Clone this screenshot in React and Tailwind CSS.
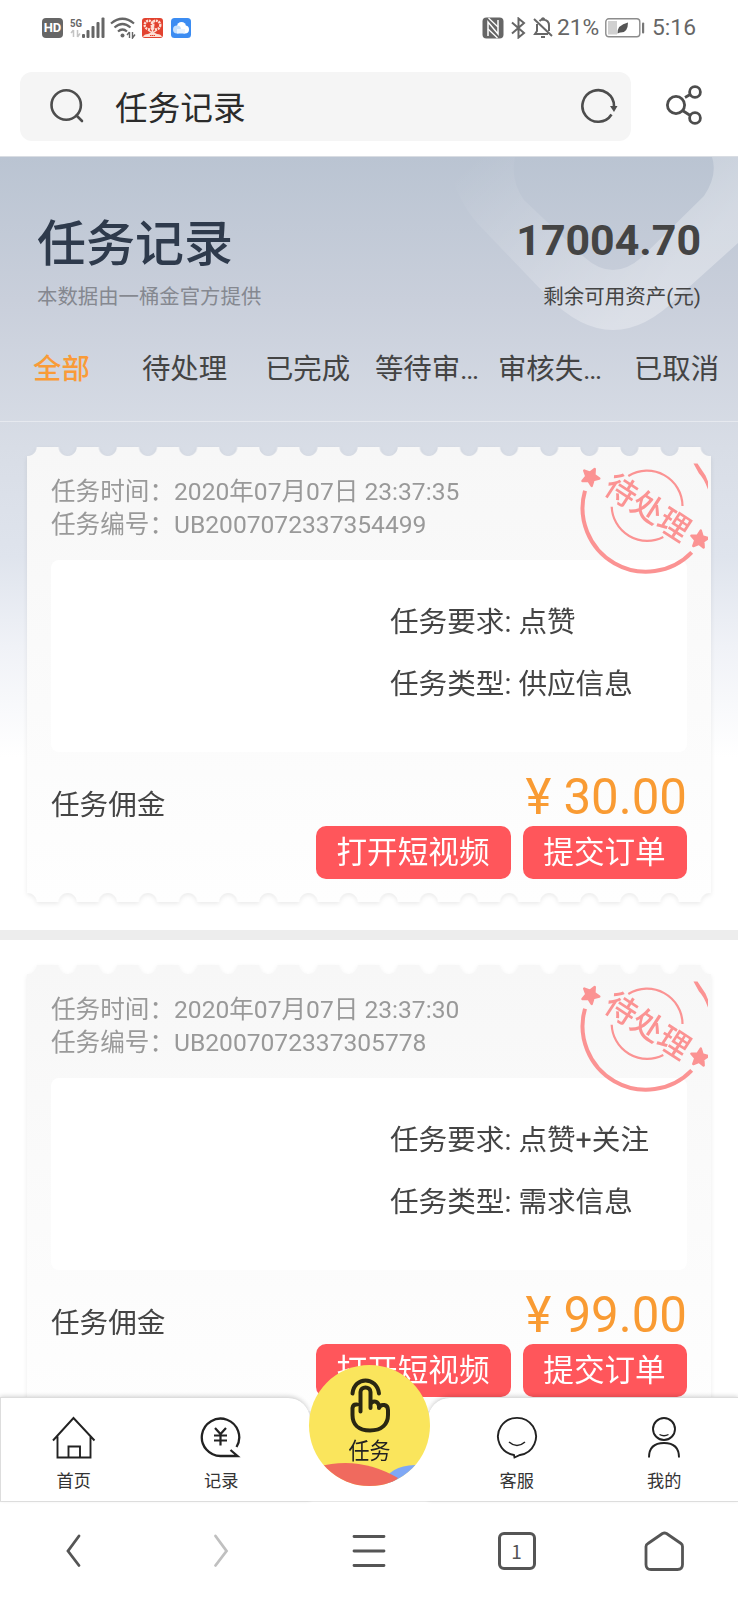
const tabs = ['全部', '待处理', '已完成', '等待审…', '审核失…', '已取消'];

const tasks = [
  { time: '2020年07月07日 23:37:35', no: 'UB2007072337354499', need: '点赞', type: '供应信息', price: '30.00' },
  { time: '2020年07月07日 23:37:30', no: 'UB2007072337305778', need: '点赞+关注', type: '需求信息', price: '99.00' },
];

const App = () => {
  return (
    <div className="relative w-[738px] h-[1600px] overflow-hidden bg-white text-[#444] font-['Roboto','Noto_Sans_CJK_SC',sans-serif]">
      <StatusBar />
      <SearchBar />

      <main className="bg-[linear-gradient(180deg,#bac4d2_0px,#c9cfdb_143px,#d8dde6_290px,#dfe4ed_400px,#f0f2f7_490px,#ffffff_600px)]">
        <Header />
        <div className="mt-[25px]">
          {tasks.map((task, i) => (
            <div key={task.no}>
              {i > 0 && <div className="h-[10px] bg-[#ededed] mt-[28px] mb-[25px]" />}
              <TaskCard {...task} />
            </div>
          ))}
        </div>
      </main>

      <div className="absolute inset-x-0 bottom-0">
        <BottomNav />
        <BrowserBar />
      </div>
    </div>
  );
};

const StatusBar = () => {
  return (
    <div className="flex items-center justify-between h-14 pl-[42px] pr-[43px] text-[#666]">
      <div className="flex items-center">
        <div className="w-[21px] h-5 rounded bg-[#666] text-white text-[13px] leading-5 font-bold text-center">HD</div>
        <svg className="ml-[7px]" width="35" height="22" viewBox="0 0 35 22" fill="#666">
          <text x="0" y="9.5" fontSize="11.5" fontWeight="700" fontFamily="Roboto" textLength="12" lengthAdjust="spacingAndGlyphs">5G</text>
          <path d="M3.5 13v7M3.5 13l-2.5 3M7.5 13v7M7.5 20l2.5-3.5" stroke="#c4c4c4" strokeWidth="1.5" fill="none" />
          <rect x="12" y="17" width="3" height="4" rx="1" />
          <rect x="16.5" y="13" width="3" height="8" rx="1" />
          <rect x="21.5" y="9" width="3" height="12" rx="1" />
          <rect x="26.5" y="5" width="3" height="16" rx="1" />
          <rect x="31.5" y="0.5" width="3" height="20.5" rx="1" />
        </svg>
        <svg className="ml-[5px]" width="26" height="22" viewBox="0 0 26 22" fill="none" stroke="#666" strokeWidth="2.2">
          <path d="M1 6.5Q12.5-3 24 6.5M4.5 10.5Q12.5 3.5 20.5 10.5M8 14.5Q12.5 10.5 17 14.5" />
          <circle cx="12.5" cy="18.5" r="2" fill="#666" stroke="none" />
          <path d="M19.5 15v6M19.5 15l-2.5 3M22.5 15v6l2.5-3.5" strokeWidth="1.4" />
        </svg>
        <svg className="ml-[6px]" width="21" height="20" viewBox="0 0 21 20">
          <rect width="21" height="20" rx="3" fill="#e2422f" />
          <circle cx="7" cy="7" r="4.3" fill="none" stroke="#fde0d5" strokeWidth="2.4" strokeDasharray="2 0.8" />
          <circle cx="14" cy="7" r="4.3" fill="none" stroke="#fde0d5" strokeWidth="2.4" strokeDasharray="2 0.8" />
          <path d="M6 12l4.5 3 4.5-3M10.5 8v6" stroke="#fde0d5" strokeWidth="1.5" fill="none" />
          <path d="M1 19q1-3 5-3l2-1h5l2 1q4 0 5 3z" fill="#fde0d5" />
          <path d="M8 17.5h5" stroke="#e2422f" strokeWidth="1.2" strokeDasharray="1.5 0.5" />
        </svg>
        <svg className="ml-[8px]" width="20" height="20" viewBox="0 0 20 20">
          <rect width="20" height="20" rx="3.5" fill="#3b8cf2" />
          <circle cx="10.5" cy="8.5" r="4.5" fill="#fff" />
          <circle cx="14" cy="11.5" r="4" fill="#fff" />
          <circle cx="6" cy="11.5" r="4" fill="#c5e0fd" />
          <rect x="6" y="11" width="8" height="4.5" fill="#e8f3ff" />
        </svg>
      </div>
      <div className="flex items-center">
        <svg className="-ml-px" width="22" height="22" viewBox="0 0 22 22">
          <rect x="0.5" y="0.5" width="21" height="21" rx="4" fill="#666" />
          <path d="M6 19V5l10 12V3" fill="none" stroke="#fff" strokeWidth="1.5" />
          <path d="M6.5 1l9.5 9M6 12l9.5 9" stroke="#fff" strokeWidth="1.3" />
        </svg>
        <svg className="ml-[7px]" width="15" height="22" viewBox="0 0 15 22" fill="none" stroke="#666" strokeWidth="2">
          <path d="M1 5.5l12 10.5-5.5 4.5V1.5L13 6 1 16.5" />
        </svg>
        <svg className="ml-[7px]" width="21" height="22" viewBox="0 0 21 22" fill="none" stroke="#666" strokeWidth="2">
          <path d="M4 7v7l-2 3h13M6.5 4Q8 2.5 10 2.5 16 3 16 8.5V14M8.5 2.5q1.5-2.5 3 0M1 2l18 17" />
          <path d="M8 20h4" />
        </svg>
        <span className="ml-[3px] pt-px text-[22.8px] w-[47px]">21%</span>
        <svg className="ml-px mr-px" width="40" height="20" viewBox="0 0 40 20">
          <rect x="0.8" y="0.8" width="34" height="18" rx="3" fill="#fff" stroke="#8c8c8c" strokeWidth="1.4" />
          <rect x="3" y="3" width="9" height="13.5" fill="#d0d0d0" />
          <path d="M12.5 15.5Q12 7 23 4.5 23 15 15 14.5z" fill="#555" />
          <rect x="37" y="4.5" width="2.2" height="11" rx="1" fill="#777" />
        </svg>
        <span className="ml-[6px] pt-px text-[22.8px] w-[43px]">5:16</span>
      </div>
    </div>
  );
};

const SearchBar = () => {
  return (
    <div className="flex items-start pt-4 pl-5 h-[101px] border-b border-[#d9dde3]">
      <div className="flex items-center w-[611px] h-[69px] rounded-xl bg-[#f5f5f5] pl-[30px] pr-[13px]">
        <svg className="-mt-0.5" width="34" height="34" viewBox="0 0 34 34" fill="none" stroke="#4d4d4d" strokeWidth="2.6" strokeLinecap="round">
          <circle cx="16.2" cy="16" r="14.7" />
          <path d="M26.5 26.5l5.5 5.5" />
        </svg>
        <div className="ml-[31px] pt-[5px] flex-1 text-[32.7px] leading-[48px] text-[#2b2b2b]">任务记录</div>
        <svg className="-mt-0.5" width="37" height="36" viewBox="0 0 37 36" fill="none" stroke="#4d4d4d" strokeWidth="2.6">
          <path d="M30.5 26.5A15.8 15.8 0 1 1 33 18" />
          <path d="M29 18h7.5L33 24z" fill="#4d4d4d" stroke="none" />
        </svg>
      </div>
      <svg className="ml-[34px] mt-[13px]" width="38" height="40" viewBox="0 0 38 40" fill="none" stroke="#4d4d4d" strokeWidth="2.8">
        <circle cx="11" cy="20" r="8.6" />
        <circle cx="30" cy="7" r="5.4" />
        <circle cx="30" cy="33" r="5.4" />
        <path d="M20 12.5l6-3.5M17.5 25.5l8.5 5.5" />
      </svg>
    </div>
  );
};

const Header = () => {
  return (
    <header className="relative h-[265px] border-b border-white/40">
      {/* check mark watermark */}
      <svg className="absolute right-0 top-0" width="298" height="180" viewBox="440 157 298 180">
        <defs>
          <linearGradient id="mark" x1="460" y1="170" x2="610" y2="330" gradientUnits="userSpaceOnUse">
            <stop offset="0" stopColor="#fff" stopOpacity="0" />
            <stop offset="0.5" stopColor="#fff" stopOpacity="0.15" />
            <stop offset="1" stopColor="#fff" stopOpacity="0.32" />
          </linearGradient>
        </defs>
        <path
          d="M446 157Q455 198 478 224L548 297Q613 363 678 297L738 243V157H712Q718 175 704 196L642 257Q613 283 584 257L524 200Q510 180 515 157Z"
          fill="url(#mark)"
        />
      </svg>
      <div className="relative flex justify-between px-[37px] pt-[52px]">
        <div>
          <h1 className="text-[49px] leading-[72px] font-medium text-[#2e3a4c]">任务记录</h1>
          <p className="text-[20.4px] leading-[30px] mt-px text-[#858890]">本数据由一桶金官方提供</p>
        </div>
        <div className="text-right">
          <p className="text-[42.9px] leading-[62px] font-bold text-[#444]">17004.70</p>
          <p className="text-[20.5px] leading-[30px] mt-[11px] text-[#444]">剩余可用资产(元)</p>
        </div>
      </div>
      <div className="relative grid grid-cols-6 mt-[37px] text-[28.4px] leading-[42px] text-center text-[#444] whitespace-nowrap">
        {tabs.map((tab, i) => (
          <span key={tab} className={i === 0 ? 'text-[#f99b38] font-medium' : tab.endsWith('…') ? 'pr-[7px]' : ''}>{tab}</span>
        ))}
      </div>
    </header>
  );
};

const TaskCard = ({ time, no, need, type, price }) => {
  return (
    <div className="relative mx-[27px] h-[455px] drop-shadow-[0_2px_2px_rgba(0,0,0,0.08)]">
      <div className="h-full px-6 pt-[28px] bg-linear-to-b from-[#f7f7f7] to-[#fefefe] [mask:radial-gradient(circle_at_50%_0,transparent_8.5px,black_9.5px)_-19.5px_0/40.13px_51%_repeat-x,radial-gradient(circle_at_50%_100%,transparent_8.5px,black_9.5px)_-19.5px_100%/40.13px_51%_repeat-x]">
        <div className="text-[24.6px] leading-[33px] text-[#999]">
          <p>任务时间：<span>{time}</span></p>
          <p>任务编号：<span>{no}</span></p>
        </div>
        <div className="mt-[19px] h-[192px] rounded-lg bg-white pl-[339px] pt-[31px] text-[28.6px] leading-[62px]">
          <p>任务要求: {need}</p>
          <p>任务类型: {type}</p>
        </div>
        <div className="flex items-center justify-between h-[74px]">
          <span className="text-[28.6px] leading-[40px] pt-[31px]">任务佣金</span>
          <span className="text-[49.2px] leading-[60px] pt-[15px] text-[#f99b33]">¥ {price}</span>
        </div>
        <div className="flex justify-end gap-3 text-[30.6px] leading-[54px] text-white">
          <button className="h-[53px] w-[195px] pr-px rounded-[10px] bg-[#ff565b]">打开短视频</button>
          <button className="h-[53px] w-[164px] pr-px rounded-[10px] bg-[#ff565b]">提交订单</button>
        </div>
      </div>
      <Stamp />
    </div>
  );
};

const Stamp = () => {
  return (
    <svg className="absolute right-[3px] top-[13px]" width="128" height="115" viewBox="0 0 128 115" fill="none" stroke="#fb9393">
      <path d="M5 30.7A63.5 63.5 0 0 0 111.7 92.3" strokeWidth="4" />
      <path d="M48.3 16A35.5 35.5 0 0 1 102.5 46" strokeWidth="2.2" />
      <path d="M31.7 46.7A35.5 35.5 0 0 0 83.3 77" strokeWidth="2.2" />
      <path d="M113.5 3.5h4l8 12 2.5 6v8q-4-11-9-16z" fill="#fb9393" stroke="none" />
      <g fill="#fb9393" strokeWidth="2.5" strokeLinejoin="round">
        <path transform="translate(10.5 17) rotate(28)" d="M0-9l2.5 5.5 6 .8-4.5 4 1.2 6-5.2-3-5.2 3 1.2-6-4.5-4 6-.8z" />
        <path transform="translate(119.5 79.5) rotate(8)" d="M0-9l2.5 5.5 6 .8-4.5 4 1.2 6-5.2-3-5.2 3 1.2-6-4.5-4 6-.8z" />
      </g>
      <text
        x="68"
        y="58.5"
        transform="rotate(33 67 47)"
        textAnchor="middle"
        fontSize="31.5"
        fontWeight="500"
        fontFamily="Noto Sans CJK SC"
        fill="#fb9393"
        stroke="none"
      >
        待处理
      </text>
    </svg>
  );
};

const NavItem = ({ label, children }) => {
  return (
    <div className="flex flex-col items-center w-[147.5px] pt-[18px]">
      <svg width="44" height="44" viewBox="0 0 44 44" fill="none" stroke="#222" strokeWidth="1.9">
        {children}
      </svg>
      <span className="mt-[9px] text-[17.2px] leading-[24px] text-[#333]">{label}</span>
    </div>
  );
};

const BottomNav = () => {
  return (
    <nav className="relative flex items-end justify-between h-[104px]">
      <div className="flex w-[310px] h-full rounded-tr-[22px] border-t border-l border-[#ddd] bg-white shadow-[0_-1px_4px_rgba(0,0,0,0.16)] *:relative *:-left-px">
        <NavItem label="首页">
          <path d="M1 24.5L21.5 2 42.500 24.500M5.500 20.500V41.500h33V20.500M16.500 41.500V30.500H28v11" />
        </NavItem>
        <NavItem label="记录">
          <path d="M37.500 31A18.700 18.700 0 1 0 22 40H38.500L31.500 34" strokeWidth="2.3" />
          <path d="M16 12l5.500 6 5.500-6M21.500 18V29.500M15 19.500h13M15 24.500h13" strokeWidth="2.2" />
        </NavItem>
      </div>
      <div className="relative z-10 -mx-1 flex-1 h-[75px] bg-white" />
      <div className="flex w-[310px] h-full justify-end rounded-tl-[22px] border-t border-[#ddd] bg-white shadow-[0_-1px_4px_rgba(0,0,0,0.16)]">
        <NavItem label="客服">
          <path d="M19 39A19 18.700 0 1 1 25 39L19.500 41.500z" />
          <path d="M14 26q8 7 16 0" strokeWidth="1.5" />
        </NavItem>
        <NavItem label="我的">
          <circle cx="22" cy="13" r="11" />
          <path d="M17.500 18.500q4.500 2.500 9 0" strokeWidth="1.3" />
          <path d="M7 41.500Q7 27 22 27T37 41.500" />
        </NavItem>
      </div>

      {/* raised center button */}
      <div className="absolute z-20 left-[309px] top-[-32px] size-[121px] rounded-full overflow-hidden bg-[#fae55c]">
        <svg className="absolute inset-0" width="121" height="121" viewBox="0 0 121 121" fill="none" stroke="#2a2712" strokeWidth="4" strokeLinecap="round" strokeLinejoin="round">
          <path d="M75 118Q80 101 106 100l16 2v20z" fill="#7fa8f5" stroke="none" />
          <path d="M8 102Q50 90 89 113L80 122H8z" fill="#f06a5e" stroke="none" />
          <path d="M43.500 28.500C45 11 68 11 70 28.500" />
          <path d="M51.500 46.500V27C51.500 21 61.500 21 61.500 27V43M61.500 43V39C64 34.500 69.500 36.500 70 41V43C72 38 79 39.500 79 45V50C79 59 73 65.500 61 65.500 49 65.500 43.500 59 43.500 50V43Q44 39 48 39.500" />
        </svg>
        <div className="absolute inset-x-0 top-[71px] text-center text-[21px] leading-[30px] text-[#222] scale-y-110">任务</div>
      </div>
    </nav>
  );
};

const BrowserBar = () => {
  return (
    <div className="grid grid-cols-5 items-center justify-items-center h-[99px] border-t border-[#e6e6e6] bg-white">
      <svg width="40" height="40" viewBox="0 0 40 40" fill="none" stroke="#555" strokeWidth="2.8" strokeLinecap="round">
        <path d="M25 5L14 20l11 14.5" />
      </svg>
      <svg width="40" height="40" viewBox="0 0 40 40" fill="none" stroke="#c0c0c0" strokeWidth="2.8" strokeLinecap="round">
        <path d="M14.500 5l11 15-11 14.5" />
      </svg>
      <svg width="40" height="40" viewBox="0 0 40 40" fill="none" stroke="#555" strokeWidth="2.8" strokeLinecap="round">
        <path d="M5 5.5h30M5 20h30M5 34.5h30" />
      </svg>
      <div className="size-[38px] rounded-[6px] border-3 border-[#555] text-[19px] leading-[31px] text-center text-[#555] font-['Noto_Sans_CJK_SC']">1</div>
      <svg width="40" height="40" viewBox="0 0 40 40" fill="none" stroke="#555" strokeWidth="2.8" strokeLinejoin="round">
        <path d="M2 15.5Q2 13.5 4 12.5L18.500 2.500Q20.500 1.500 22.500 2.500L37 12.500Q38.500 13.500 38.500 15.500V33.500Q38.500 38.500 33.500 38.500H7Q2 38.500 2 33.500Z" />
      </svg>
    </div>
  );
};

export default App;
